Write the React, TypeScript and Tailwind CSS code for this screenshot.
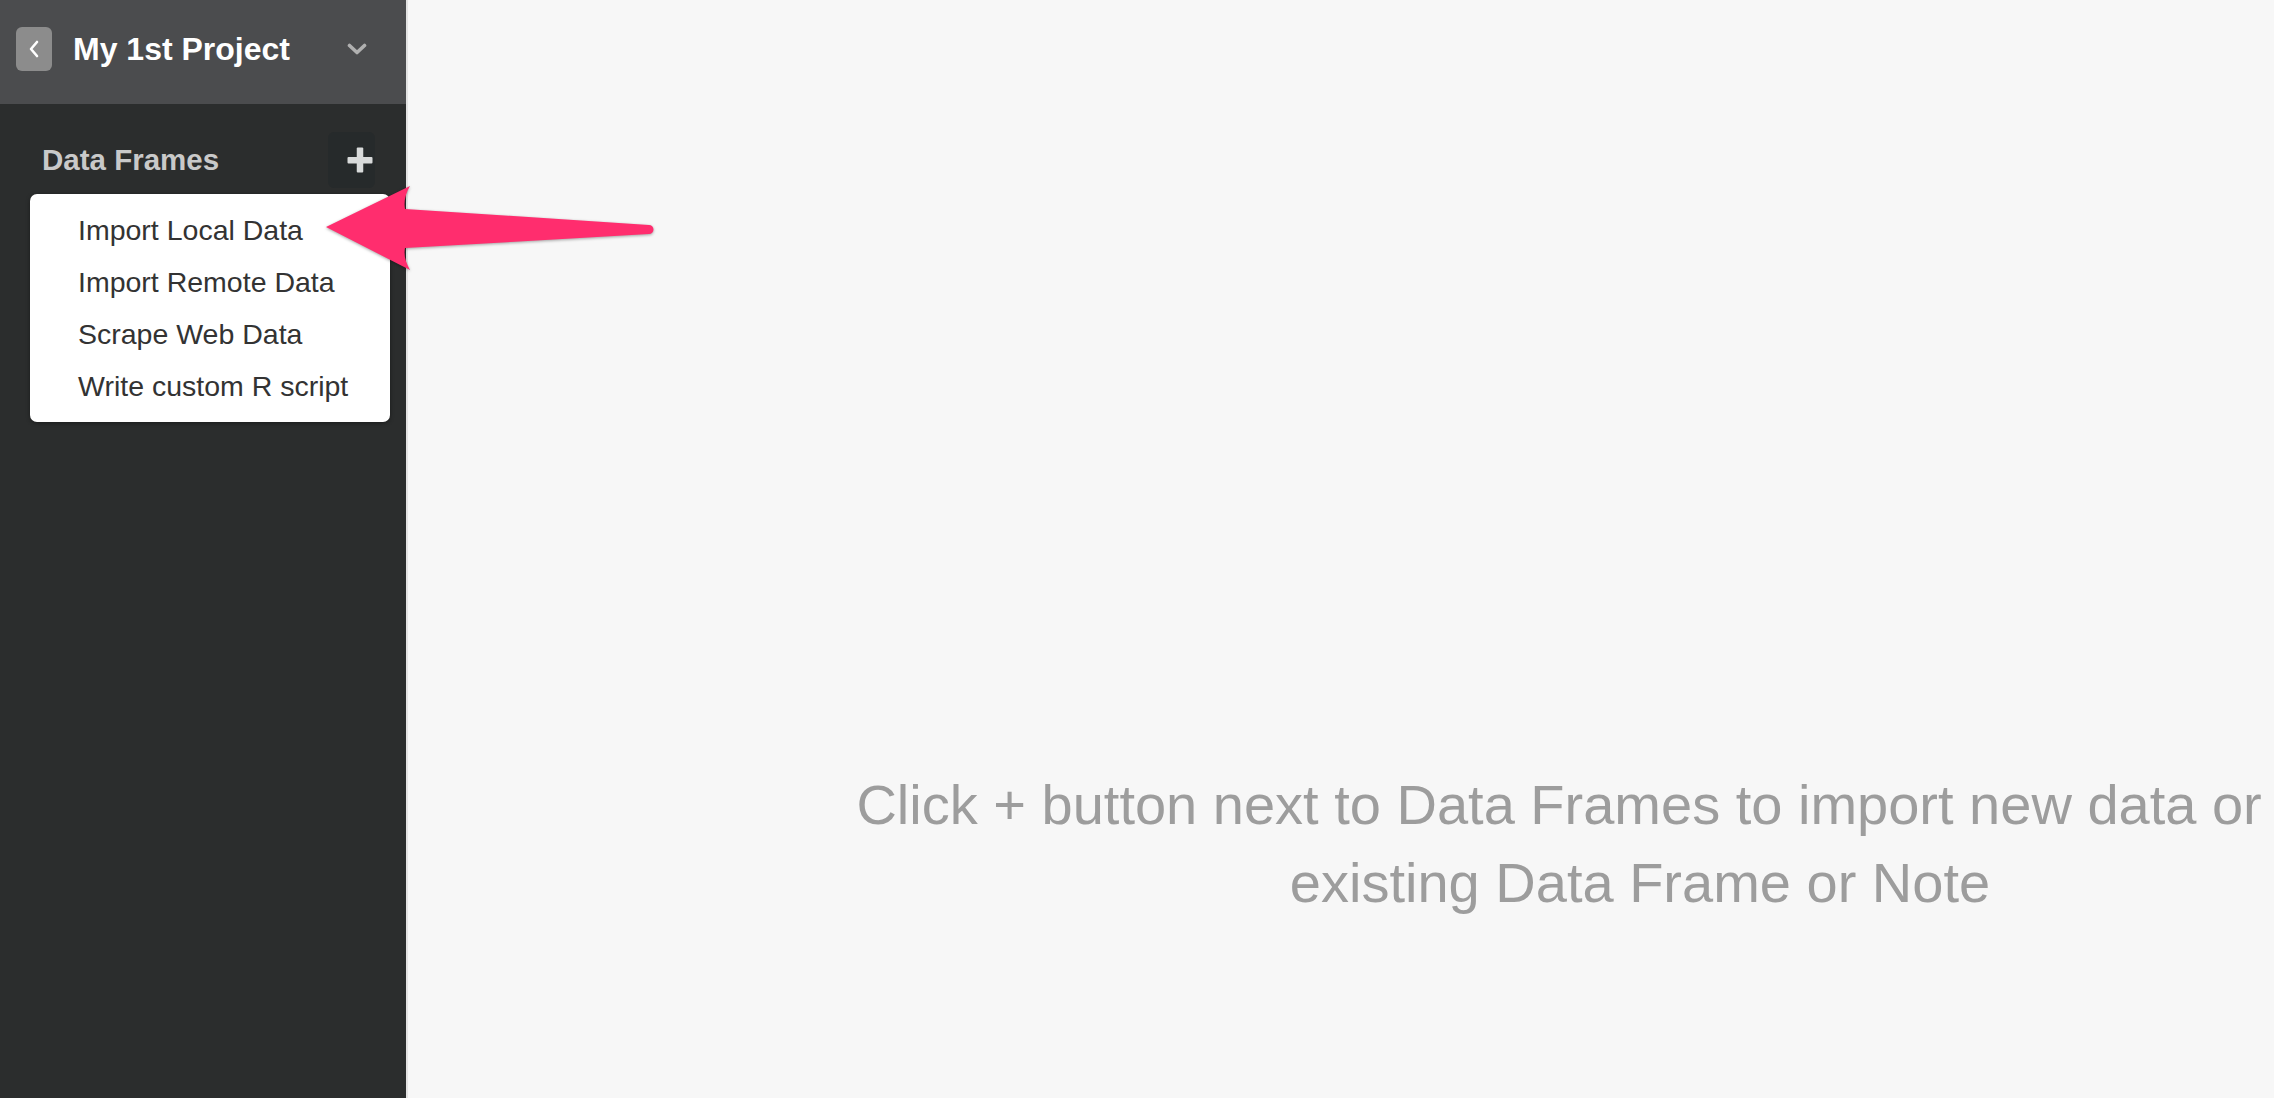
import React from "react";

export default function App() {
  const items = ["Import Local Data", "Import Remote Data", "Scrape Web Data", "Write custom R script"];
  return (
    <div className="relative flex h-[1098px] w-[2274px] overflow-hidden font-['Liberation_Sans',Arial,sans-serif]">
      <aside className="relative flex w-[408px] shrink-0 flex-col border-r-2 border-[#e3e3e3] bg-[#2b2d2d]">
        <header className="flex h-[104px] items-center bg-[#4b4c4e] pb-[6px] pl-4 pr-[39px]">
          <div className="flex h-[44px] w-[36px] items-center justify-center rounded-md bg-[#8c8c8c]">
            <svg width="12" height="18" viewBox="0 0 12 18">
              <path d="M9 2 L3 9 L9 16" fill="none" stroke="#ffffff" strokeWidth="2.6" strokeLinecap="round" strokeLinejoin="round" />
            </svg>
          </div>
          <span className="ml-[21px] text-[32px] font-bold leading-none text-white">My 1st Project</span>
          <svg className="ml-auto" width="20" height="12" viewBox="0 0 20 12">
            <path d="M2.5 2.5 L10 9.5 L17.5 2.5" fill="none" stroke="#b0b0b0" strokeWidth="3.6" strokeLinecap="round" strokeLinejoin="round" />
          </svg>
        </header>
        <div className="mt-[28px] flex h-[56px] items-center justify-between pl-[42px] pr-[31px]">
          <span className="text-[29.5px] font-bold text-[#c9c9c9]">Data Frames</span>
          <div className="flex h-[56px] w-[47px] items-center justify-end rounded-md bg-[#262a2b] pr-[2px]">
            <svg width="26" height="26" viewBox="0 0 26 26">
              <rect x="0.5" y="10" width="25" height="6.5" rx="1" fill="#d8dada" />
              <rect x="9.75" y="0.5" width="6.5" height="25" rx="1" fill="#d8dada" />
            </svg>
          </div>
        </div>
        <div className="absolute left-[30px] top-[194px] w-[360px] rounded-[7px] bg-white py-[10px] shadow-[0_1px_4px_rgba(0,0,0,0.4)]">
          {items.map((t) => (
            <div key={t} className="pl-[48px] text-[28.5px] leading-[52px] text-[#333333]">
              {t}
            </div>
          ))}
        </div>
      </aside>
      <main className="flex-1 overflow-hidden bg-[#f7f7f7]">
        <div className="w-[2464px] whitespace-nowrap pt-[766px] text-center text-[56px] leading-[78px] text-[#9d9d9d]">
          Click + button next to Data Frames to import new data or select
          <br />
          existing Data Frame or Note
        </div>
      </main>
      <svg
        className="pointer-events-none absolute left-0 top-0 drop-shadow-[0_1px_1.5px_rgba(0,0,0,0.35)]"
        width="700"
        height="300"
        viewBox="0 0 700 300"
      >
        <path
          d="M326 227 L410 186 Q403 198 405 209 L649 225 A4.5 4.5 0 0 1 649 234 L405 248 Q403 258 410 270 Z"
          fill="#ff2d6e"
        />
      </svg>
    </div>
  );
}
